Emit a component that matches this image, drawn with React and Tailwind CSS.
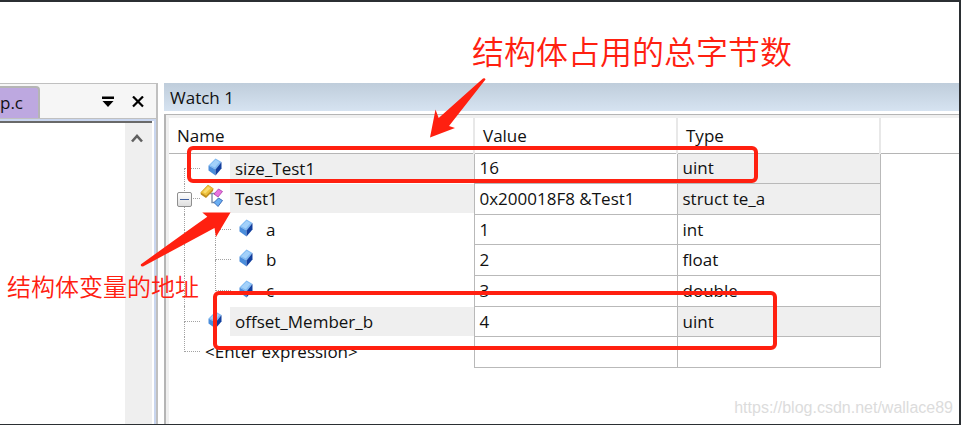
import React, { useState } from "react";

const variables = [
  { name: "size_Test1", value: "16", type: "uint", level: 0, icon: "member", shaded: true, first: true },
  { name: "Test1", value: "0x200018F8 &Test1", type: "struct te_a", level: 0, icon: "struct", shaded: true },
  { name: "a", value: "1", type: "int", level: 1, icon: "member" },
  { name: "b", value: "2", type: "float", level: 1, icon: "member" },
  { name: "c", value: "3", type: "double", level: 1, icon: "member", last: true },
  { name: "offset_Member_b", value: "4", type: "uint", level: 0, icon: "member", shaded: true },
  { name: "<Enter expression>", value: "", type: "", level: 0, last: true },
];

function MemberIcon() {
  return (
    <svg viewBox="0 0 14 18" className="h-[18px] w-[14px] shrink-0">
      <path d="M0.5 7.5 L7.5 0.5 L13.5 4 L7.5 11.5 Z" fill="#7fbaf2" />
      <path d="M2 7.3 L7.6 1.8 L11.5 4 L6.8 9.6 Z" fill="#a3d1fa" />
      <path d="M0.5 7.5 L7.5 11.5 L7.5 17.5 L0.5 12.5 Z" fill="#4a8ddb" />
      <path d="M13.5 4 L7.5 11.5 L7.5 17.5 L13.5 10.5 Z" fill="#123f9e" />
    </svg>
  );
}

function StructIcon() {
  return (
    <svg viewBox="0 0 24 24" className="h-6 w-6 shrink-0">
      <path d="M10 9.5 H17 M12 9.5 V18.5 H16" fill="none" stroke="#7d8ea6" strokeWidth="1.4" />
      <path d="M0.5 8.5 L8 0.8 L13.5 4.5 L13 7 L6 14 L0.8 10.5 Z" fill="#c08d1c" />
      <path d="M0.8 8.5 L8 1 L13.3 4.5 L6.2 11.8 Z" fill="#ecc03c" />
      <path d="M3 8 L8 2.8 L10.5 4.3 L5.3 9.5 Z" fill="#f9dc6e" />
      <path d="M14 10 L18.5 5 L22.5 7.5 L18 13 Z" fill="#ea74e0" stroke="#a83aa6" strokeWidth="0.8" />
      <path d="M14 18.5 L18.5 14 L22.5 16.5 L18 22.5 Z" fill="#6aaef2" stroke="#2556a8" strokeWidth="0.8" />
    </svg>
  );
}

// one indent step of the tree, with its dotted connector
function Guide({ first, last, branch = true }) {
  return (
    <span className="flex h-full w-[31px] shrink-0 flex-col pl-[15px]">
      <span
        className={`h-1/2 border-dotted border-[#a3a3a3] ${first ? "" : "border-l"} ${branch ? "border-b" : ""}`}
      ></span>
      <span className={`h-1/2 border-dotted border-[#a3a3a3] ${last ? "" : "border-l"}`}></span>
    </span>
  );
}

function NameCell({ row, open, onToggle }) {
  return (
    <div className="flex h-full items-center">
      <span className="relative flex h-full">
        <Guide first={row.first} last={row.last && row.level === 0} branch={row.level === 0} />
        {row.icon === "struct" && (
          <button
            aria-label="Toggle Test1"
            onClick={onToggle}
            className="absolute left-2 top-2 flex h-[15px] w-[15px] items-center justify-center rounded-xs border border-[#8f8f8f] bg-linear-to-b from-white to-[#dedede]"
          >
            <span className="h-px w-[9px] bg-[#3f5f9f]"></span>
            {!open && <span className="absolute h-[9px] w-px bg-[#3f5f9f]"></span>}
          </button>
        )}
      </span>
      {row.level === 1 && <Guide last={row.last} />}
      {row.icon === "member" && (
        <span className="flex w-[30px] shrink-0 justify-center pb-1">
          <MemberIcon />
        </span>
      )}
      {row.icon === "struct" && (
        <span className="flex h-[30px] w-[30px] shrink-0 items-start">
          <StructIcon />
        </span>
      )}
      <span
        className={`flex h-[29px] flex-1 items-center whitespace-nowrap pl-[5px] ${row.shaded ? "bg-[#efefef]" : ""}`}
      >
        {row.name}
      </span>
    </div>
  );
}

function EditorPane() {
  return (
    <section className="flex w-[158px] shrink-0 flex-col border-r-2 border-t border-[#c0c0c0]">
      <div className="flex h-[35px] items-start border-b border-[#c0c0c0] bg-[#f6f6f6]">
        <button className="mt-[2px] h-8 w-10 rounded-tr-sm border-r-2 border-t-2 border-[#b5b5b5] bg-[#bda8e0] text-left font-medium">
          p.c
        </button>
        <button aria-label="Window list" className="ml-auto mr-2.5 mt-2 p-1">
          <svg viewBox="0 0 12 12" className="h-3 w-3">
            <path d="M0 0.5 H12 V3 H0 Z M0.5 5 H11.5 L6 11 Z" fill="#000" />
          </svg>
        </button>
        <button aria-label="Close" className="mr-2 mt-2 p-1">
          <svg viewBox="0 0 12 12" className="h-3 w-3">
            <path d="M1 0.5 L11 10.5 M11 0.5 L1 10.5" stroke="#000" strokeWidth="2.2" />
          </svg>
        </button>
      </div>
      <div className="flex flex-1 border-r-2 border-t-2 border-[#c9d6ef]">
        <div className="mr-0.5 flex flex-1 border-t-2 border-[#696969]">
          <div className="flex-1 bg-white"></div>
          <div className="flex w-[27px] justify-center bg-[#efefef] pr-1 pt-2.5">
            <svg viewBox="0 0 12 10" className="h-2.5 w-3">
              <path d="M1 8.5 L6 3 L11 8.5" fill="none" stroke="#606060" strokeWidth="2.6" />
            </svg>
          </div>
        </div>
      </div>
    </section>
  );
}

function WatchPane() {
  const [open, setOpen] = useState(true);
  const rows = variables.filter((row) => open || row.level === 0);

  return (
    <section className="ml-1.5 flex min-w-0 flex-1 flex-col">
      <h2 className="flex h-7 items-center bg-linear-to-b from-[#bfcddb] to-[#d6e3f1] pl-1.5 pt-0.5">
        Watch 1
      </h2>
      <div className="mt-[3px] flex-1 border-l-2 border-t border-[#b5b5b5]">
        <div className="h-full border-l-3 border-t-3 border-[#f0f0f0]">
          <table className="h-[250px] w-full table-fixed border-collapse text-left">
            <colgroup>
              <col className="w-[305px]" />
              <col className="w-[203px]" />
              <col className="w-[203px]" />
              <col />
            </colgroup>
            <thead>
              <tr className="h-[35px] border-b border-[#b5b5b5]">
                <th className="border-r-2 border-r-[#e8e8e8] p-0 pl-2 pt-0.5 font-normal">Name</th>
                <th className="border-r-2 border-r-[#e8e8e8] p-0 pl-2 pt-0.5 font-normal">Value</th>
                <th className="border-r-2 border-r-[#e8e8e8] p-0 pl-2 pt-0.5 font-normal">Type</th>
                <th className="p-0"></th>
              </tr>
            </thead>
            <tbody>
              {rows.map((row) => (
                <tr key={row.name}>
                  <td className="h-[30px] p-0">
                    <NameCell row={row} open={open} onToggle={() => setOpen(!open)} />
                  </td>
                  <td className="border border-[#b9b9b9] p-0 pl-[5px]">{row.value}</td>
                  <td className={`border border-[#b9b9b9] p-0 pl-[5px] ${row.shaded ? "bg-[#efefef]" : ""}`}>
                    {row.type}
                  </td>
                  <td className="p-0"></td>
                </tr>
              ))}
            </tbody>
          </table>
        </div>
      </div>
    </section>
  );
}

// red marks drawn over the debugger window
function Annotations() {
  return (
    <div className="pointer-events-none absolute inset-0 text-[#ff2010]">
      <div className="absolute left-[187px] top-[144px] h-[37px] w-[571px] rounded-md border-4 border-[#ff2010]"></div>
      <div className="absolute left-[213px] top-[289px] h-[59px] w-[564px] rounded-md border-4 border-[#ff2010]"></div>
      <svg viewBox="0 2 500 280" className="absolute left-0 top-0 h-[280px] w-[500px]" fill="#ff2010">
        <path d="M483 78.5 Q485 77.5 485.5 79.5 L449 126 L455 128 L430 137.5 L435.5 109.5 L438.7 118 Z" />
        <path d="M141 264.3 Q180 236 207.3 216.7 L202.3 212.5 L230.5 212.5 L216 237 L214.5 228 L143 266.5 Q140 266.5 141 264.3 Z" />
      </svg>
      <p className="absolute left-[472px] top-[26px] whitespace-nowrap font-['Noto_Sans_CJK_SC',sans-serif] text-[32px] font-[350] leading-11">
        结构体占用的总字节数
      </p>
      <p className="absolute left-[7px] top-[268px] whitespace-nowrap font-['Noto_Sans_CJK_SC',sans-serif] text-[24px] font-[350] leading-8">
        结构体变量的地址
      </p>
    </div>
  );
}

export default function App() {
  return (
    <main className="relative flex min-h-screen flex-col border-b border-r-2 border-t-2 border-[#2b2f33] bg-white font-['Open_Sans','Noto_Sans_CJK_SC',sans-serif] text-[17px] leading-6 text-[#111]">
      <div className="flex flex-1 pt-[81px]">
        <EditorPane />
        <WatchPane />
      </div>
      <Annotations />
      <p className="absolute bottom-1 right-1.5 font-['Liberation_Sans',sans-serif] text-[16px] text-[#dcdcdc]">
        https://blog.csdn.net/wallace89
      </p>
    </main>
  );
}
